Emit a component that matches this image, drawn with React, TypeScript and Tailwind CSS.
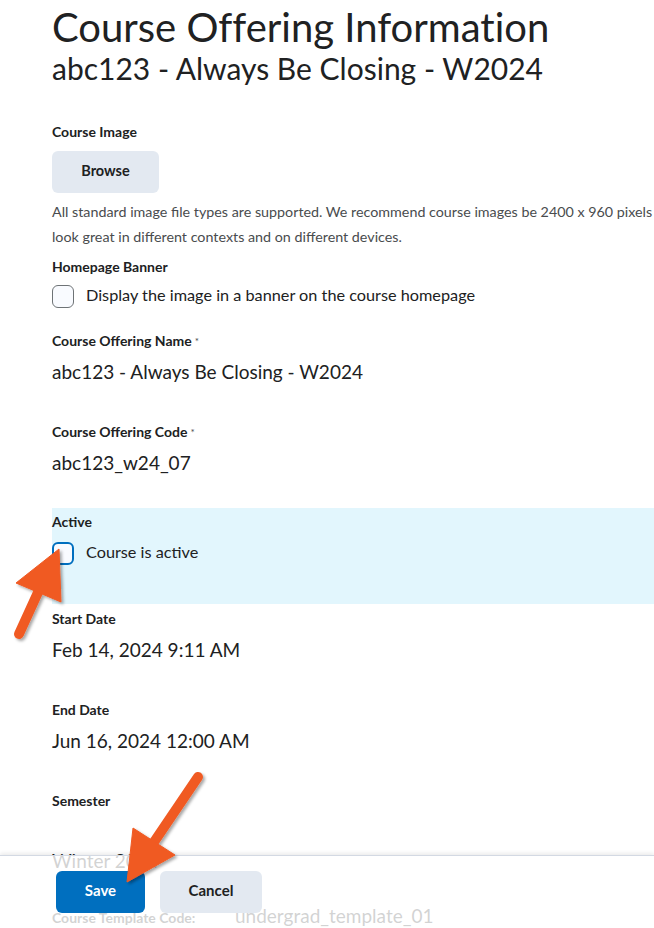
import React from 'react';

const font = { fontFamily: 'Lato, "Open Sans", sans-serif' };

interface FieldProps {
  label: string;
  required?: boolean;
  value: string;
  className?: string;
}

const Field: React.FC<FieldProps> = ({ label, required, value, className = '' }) => (
  <div className={className}>
    <div className="text-[14px] font-bold leading-5 text-[#202122]">
      {label}
      {required && <span className="ml-[3px] align-top text-[10px] font-normal text-[#494c4e]">*</span>}
    </div>
    <div className="mt-[7px] text-[19px] leading-7 text-[#202122]">{value}</div>
  </div>
);

const Checkbox: React.FC<{ label: string; focused?: boolean }> = ({ label, focused }) => (
  <label className="flex items-start gap-3">
    <span
      className={
        focused
          ? 'mt-[1px] h-[23px] w-[22px] shrink-0 rounded-[6px] border-2 border-[#006fbf] bg-[#f9fbff]'
          : 'mt-[1px] h-[23px] w-[22px] shrink-0 rounded-[6px] border-[1.5px] border-[#6e7376] bg-[#f9fbff]'
      }
    />
    <span className="text-[16.25px] leading-[21px] text-[#202122]">{label}</span>
  </label>
);

const Arrows: React.FC = () => (
  <svg className="pointer-events-none absolute left-0 top-0" width="654" height="928">
    <defs>
      <filter id="sh" x="-20%" y="-20%" width="140%" height="140%">
        <feDropShadow dx="2" dy="2" stdDeviation="1.5" floodColor="#000" floodOpacity="0.35" />
      </filter>
    </defs>
    <g filter="url(#sh)" fill="#f05a24" stroke="#f05a24">
      <line x1="19" y1="634" x2="40" y2="588" strokeWidth="10" strokeLinecap="round" />
      <polygon points="59,549 16,583 61,602" strokeWidth="1" strokeLinejoin="round" />
      <line x1="198" y1="777" x2="152" y2="845" strokeWidth="10" strokeLinecap="round" />
      <polygon points="127,882 133,828 175,855" strokeWidth="1" strokeLinejoin="round" />
    </g>
  </svg>
);

export default function App() {
  return (
    <div className="relative h-[928px] w-[654px] overflow-hidden bg-white" style={font}>
      <div className="pl-[52px] pt-[5px]">
        <h1 className="text-[40px] leading-[44px] text-[#202122] [font-variant-ligatures:none]">
          Course Offering Information
        </h1>
        <h2 className="mt-[1px] text-[30px] leading-9 text-[#202122]">abc123 - Always Be Closing - W2024</h2>

        <div className="mt-[36px] text-[14px] font-bold leading-5 text-[#202122]">Course Image</div>
        <button className="mt-[9px] h-[42px] w-[107px] rounded-[6px] bg-[#e3e9f1] pb-[3px] text-[14.5px] font-bold text-[#202122]">
          Browse
        </button>
        <p className="mt-[6px] whitespace-nowrap text-[14.3px] leading-[25px] text-[#494c4e]">
          All standard image file types are supported. We recommend course images be 2400 x 960 pixels
          <br />
          look great in different contexts and on different devices.
        </p>

        <div className="mt-[8px] text-[14px] font-bold leading-5 text-[#202122]">Homepage Banner</div>
        <div className="mt-[7px]">
          <Checkbox label="Display the image in a banner on the course homepage" />
        </div>

        <Field className="mt-[23px]" label="Course Offering Name" required value="abc123 - Always Be Closing - W2024" />
        <Field className="mt-[36px]" label="Course Offering Code" required value="abc123_w24_07" />

        <div className="mt-[31px] h-[96px] bg-[#e2f6fd] pt-[4px]">
          <div className="text-[14px] font-bold leading-5 text-[#202122]">Active</div>
          <div className="mt-[9px]">
            <Checkbox label="Course is active" focused />
          </div>
        </div>

        <Field className="mt-[5px]" label="Start Date" value="Feb 14, 2024 9:11 AM" />
        <Field className="mt-[36px]" label="End Date" value="Jun 16, 2024 12:00 AM" />

        <div className="mt-[36px] text-[14px] font-bold leading-5 text-[#202122]">Semester</div>
        <div className="mt-[36px] text-[19px] leading-7 text-[#202122]">Winter 2024</div>

        <div className="mt-[27px] flex items-baseline">
          <span className="w-[183px] text-[14px] font-bold text-[#202122]">Course Template Code:</span>
          <span className="text-[19px] text-[#202122]">undergrad_template_01</span>
        </div>
      </div>

      <div className="absolute bottom-0 left-0 right-0 h-[73px] border-t border-[#d3d9e3] bg-white/80 pl-[56px] pt-[15px] shadow-[0_-2px_4px_rgba(0,0,0,0.08)]">
        <div className="flex gap-[15px]">
          <button className="h-[42px] w-[89px] rounded-[6px] bg-[#006fbf] pb-[3px] text-[15px] font-bold text-white">
            Save
          </button>
          <button className="h-[42px] w-[102px] rounded-[6px] bg-[#e3e9f1] pb-[3px] text-[15px] font-bold text-[#202122]">
            Cancel
          </button>
        </div>
      </div>

      <Arrows />
    </div>
  );
}
